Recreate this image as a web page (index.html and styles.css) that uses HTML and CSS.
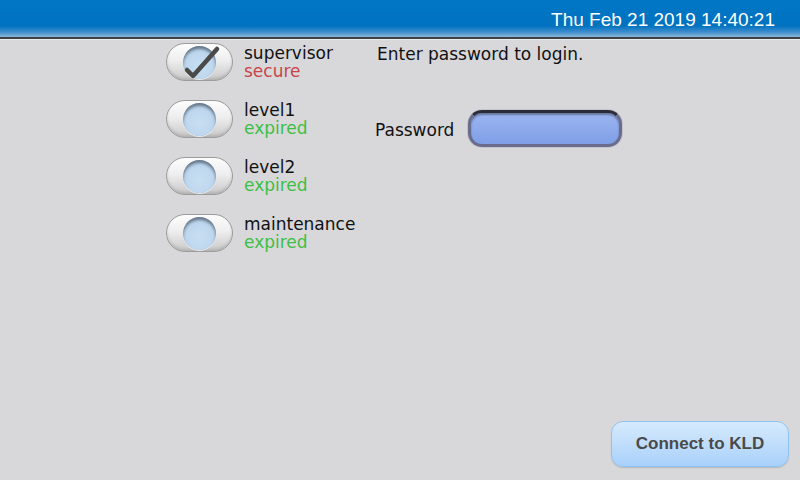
FILE: index.html
```html
<!DOCTYPE html>
<html lang="en">
<head>
    <meta charset="UTF-8">
    <title>Login</title>
    <link rel="stylesheet" href="styles.css">
</head>
<body>
    <div class="header">
        <span class="clock">Thu Feb 21 2019 14:40:21</span>
    </div>

    <div class="main">
        <div class="users">
            <div class="user">
                <div class="toggle">
                    <div class="knob"></div>
                    <svg class="check" width="44" height="40" viewBox="0 0 44 40">
                        <path d="M20 27 L26 33 L50 6" fill="none" stroke="#4a4a4a" stroke-width="4.5" stroke-linecap="round" stroke-linejoin="round"/>
                    </svg>
                </div>
                <div class="info">
                    <div class="name">supervisor</div>
                    <div class="state secure">secure</div>
                </div>
            </div>
            <div class="user">
                <div class="toggle"><div class="knob"></div></div>
                <div class="info">
                    <div class="name">level1</div>
                    <div class="state expired">expired</div>
                </div>
            </div>
            <div class="user">
                <div class="toggle"><div class="knob"></div></div>
                <div class="info">
                    <div class="name">level2</div>
                    <div class="state expired">expired</div>
                </div>
            </div>
            <div class="user">
                <div class="toggle"><div class="knob"></div></div>
                <div class="info">
                    <div class="name">maintenance</div>
                    <div class="state expired">expired</div>
                </div>
            </div>
        </div>

        <div class="login">
            <div class="intro">Enter password to login.</div>
            <div class="pw-row">
                <label class="pw-label">Password</label>
                <div class="pw-field"></div>
            </div>
        </div>
    </div>

    <div class="footer">
        <button class="connect">Connect to KLD</button>
    </div>
</body>
</html>
```

FILE: styles.css
```css
html, body {
    margin: 0;
    height: 100%;
}
body {
    background: #d8d8da;
    font-family: "DejaVu Sans", sans-serif;
    font-size: 17px;
    color: #111;
    display: flex;
    flex-direction: column;
    overflow: hidden;
}
.header {
    height: 37px;
    background: linear-gradient(#0077c6 0%, #0072c0 70%, #3c8ccc 86%, #8ab6da 100%);
    border-bottom: 2px solid #3e4246;
    box-shadow: 0 1px 0 #ececec;
    display: flex;
    align-items: center;
    justify-content: flex-end;
    padding-right: 25px;
}
.clock {
    font-family: "Liberation Sans", Arial, sans-serif;
    font-size: 19px;
    color: #fff;
    margin-top: 2px;
}
.main {
    flex: 1;
    display: flex;
    padding: 4px 0 0 166px;
}
.users {
    width: 209px;
    display: flex;
    flex-direction: column;
    gap: 19px;
}
.user {
    display: flex;
    align-items: flex-start;
}
.toggle {
    position: relative;
    width: 65px;
    height: 36px;
    border-radius: 19px;
    border: 1px solid #9c9c9c;
    background: linear-gradient(#fdfdfd 0%, #eeeeee 45%, #c9c9c9 100%);
    box-shadow: inset 0 -2px 3px rgba(0, 0, 0, 0.12);
    display: flex;
    align-items: center;
    justify-content: center;
}
.knob {
    width: 33px;
    height: 33px;
    border-radius: 50%;
    background: radial-gradient(circle at 50% 60%, #c8dff2 0%, #bcd6ee 60%, #a9c4dc 100%);
    box-shadow: inset 0 3px 3px rgba(40, 50, 60, 0.55), 0 1px 0 rgba(255, 255, 255, 0.7);
}
.check {
    position: absolute;
    left: 0;
    top: -1px;
    overflow: visible;
}
.info {
    margin: 1px 0 0 11px;
    line-height: 18px;
}
.secure {
    color: #c8444a;
}
.expired {
    color: #3cbf45;
}
.login {
    display: flex;
    flex-direction: column;
}
.intro {
    margin-top: 2px;
    line-height: 18px;
    padding-left: 2px;
}
.pw-row {
    display: flex;
    align-items: center;
    margin-top: 47px;
}
.pw-label {
    line-height: 18px;
    width: 93px;
    margin-top: 2px;
}
.pw-field {
    width: 148px;
    height: 31px;
    border-radius: 14px;
    border: 3px solid #6a6c8e;
    border-top-color: #2c2c38;
    background: linear-gradient(#9db6f2, #7e9ee6);
    box-shadow: 0 0 0 1px #c4c4cc, inset 0 2px 2px rgba(0, 0, 0, 0.35);
}
.footer {
    display: flex;
    justify-content: flex-end;
    padding: 0 11px 13px 0;
}
.connect {
    width: 178px;
    height: 46px;
    border-radius: 12px;
    border: 1px solid #8fc3f4;
    background: linear-gradient(#d6eafc, #a9d1fb);
    box-shadow: 0 1px 1px rgba(0, 0, 0, 0.15);
    font-family: "Liberation Sans", Arial, sans-serif;
    font-weight: bold;
    font-size: 17px;
    color: #4a4a4a;
}
```
